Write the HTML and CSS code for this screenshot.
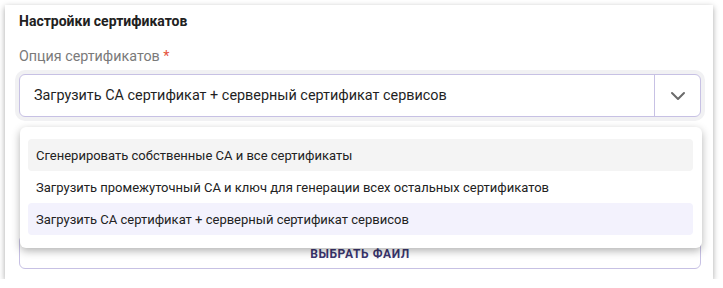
FILE: index.html
```html
<!DOCTYPE html>
<html lang="ru">
<head>
<meta charset="utf-8">
<link rel="stylesheet" href="styles.css">
</head>
<body>
<div class="card">
  <div class="title">Настройки сертификатов</div>
  <div class="label">Опция сертификатов <span class="req">*</span></div>
  <div class="field">
    <div class="select">
      <div class="value">Загрузить CA сертификат + серверный сертификат сервисов</div>
      <div class="toggle">
        <svg width="16" height="10" viewBox="0 0 16 10"><path d="M2 2 L8 8 L14 2" fill="none" stroke="#6b6b6b" stroke-width="2" stroke-linecap="round" stroke-linejoin="round"/></svg>
      </div>
    </div>
    <div class="menu">
      <div class="item hover">Сгенерировать собственные CA и все сертификаты</div>
      <div class="item">Загрузить промежуточный CA и ключ для генерации всех остальных сертификатов</div>
      <div class="item selected">Загрузить CA сертификат + серверный сертификат сервисов</div>
    </div>
  </div>
  <div class="upload">ВЫБРАТЬ ФАЙЛ</div>
</div>
</body>
</html>
```
FILE: styles.css
```css
html, body {
  margin: 0;
  padding: 0;
  background: #ffffff;
  font-family: Roboto, "Liberation Sans", sans-serif;
  color: #212121;
}
.card {
  margin: 5px 10px 0 5px;
  width: 708px;
  box-sizing: border-box;
  background: #fff;
  box-shadow: 0 2px 6px rgba(0, 0, 0, 0.35);
  padding: 6px 12px 10px 14px;
}
.title {
  font-size: 14px;
  font-weight: 700;
  line-height: 20px;
  color: #212121;
}
.label {
  margin-top: 15px;
  font-size: 14.3px;
  line-height: 20px;
  color: #7a7a7a;
}
.req {
  color: #e5533d;
}
.field {
  position: relative;
  margin-top: 8px;
}
.select {
  display: flex;
  height: 43px;
  box-sizing: border-box;
  border: 1px solid #c7c1e4;
  border-radius: 6px;
  box-shadow: 0 0 0 4px #f1f1f3;
  background: #fff;
}
.value {
  flex: 1;
  display: flex;
  align-items: center;
  padding-left: 14px;
  font-size: 14.4px;
  color: #1f1f1f;
}
.toggle {
  width: 45px;
  border-left: 1px solid #c7c1e4;
  display: flex;
  align-items: center;
  justify-content: center;
}
.menu {
  position: absolute;
  top: 53px;
  left: 1px;
  width: 682px;
  box-sizing: border-box;
  padding: 12px 9px 13px 8px;
  background: #fff;
  border-radius: 6px;
  box-shadow: 0 3px 8px rgba(0, 0, 0, 0.3);
  z-index: 2;
}
.item {
  height: 32px;
  display: flex;
  align-items: center;
  padding-left: 8px;
  border-radius: 4px;
  font-size: 13px;
  color: #222;
}
.item.hover {
  background: #f4f4f4;
}
.item.selected {
  background: #f3f2fd;
}
.upload {
  margin-top: 118px;
  height: 34px;
  box-sizing: border-box;
  border: 1px solid #c7c1e4;
  border-radius: 6px;
  display: flex;
  align-items: center;
  justify-content: center;
  padding-top: 4px;
  font-size: 12px;
  font-weight: 700;
  letter-spacing: 0.6px;
  color: #3b3670;
}
```
